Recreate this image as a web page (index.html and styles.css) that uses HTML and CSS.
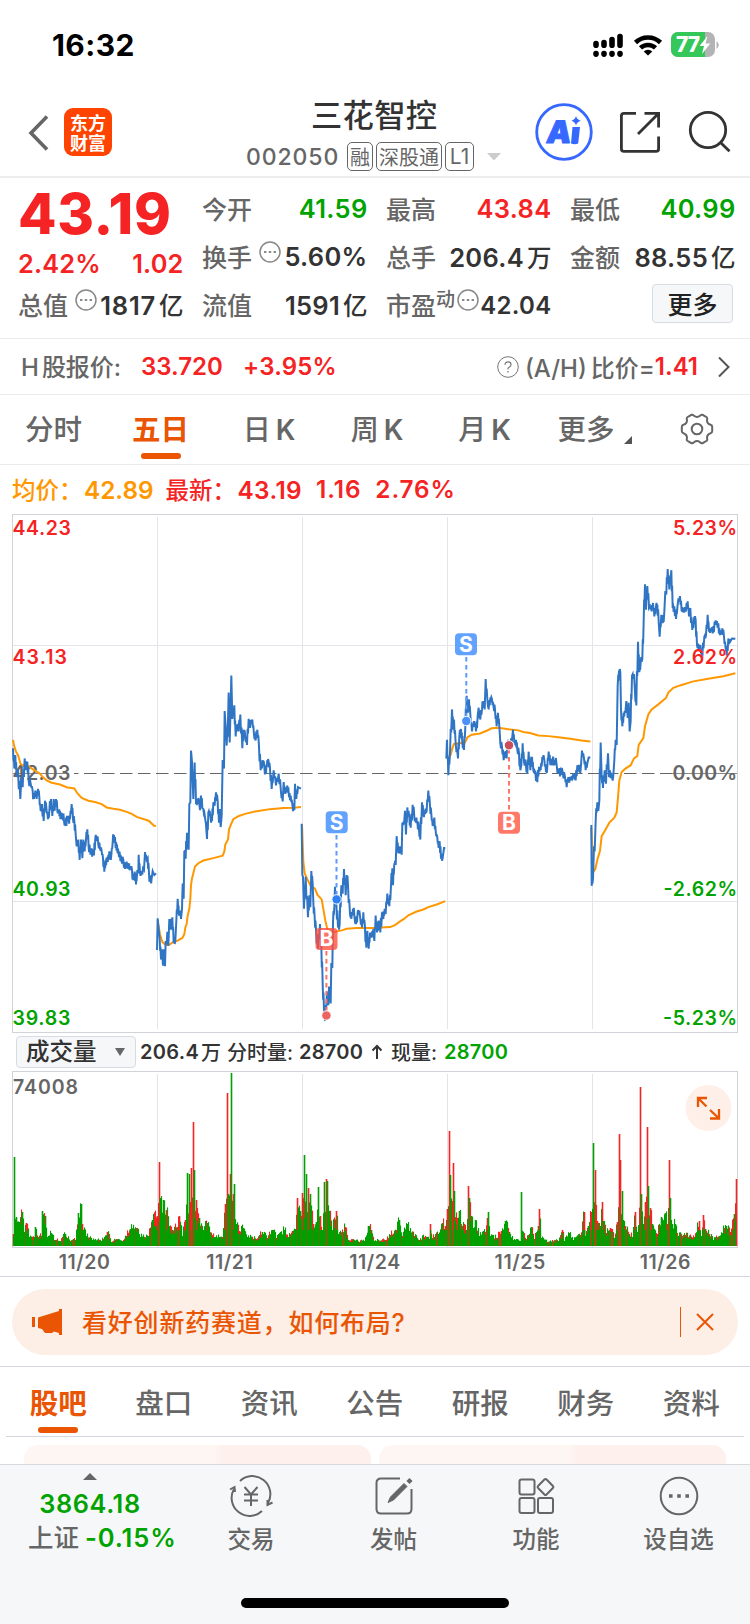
FILE: index.html
```html
<!DOCTYPE html>
<html lang="zh-CN">
<head>
<meta charset="utf-8">
<title>三花智控 002050</title>
<link rel="stylesheet" href="styles.css">
</head>
<body>
<div class="app">
  <div class="status">
    <span class="clock">16:32</span>
    <svg class="status-icons" width="128" height="28" viewBox="592 31 128 28">
      <g stroke="#000" stroke-width="5.6" stroke-linecap="round">
        <path d="M596 43.5v1.700M604 42.500v2.700M612 39.500v5.700M620 36.500v8.700"/>
        <path d="M596 53.500v.6M604 53.500v.6M612 53.500v.6M620 53.500v.6"/>
      </g>
      <g fill="none" stroke="#000" stroke-width="4.600">
        <path d="M635.500 42.500a18 18 0 0 1 25 0"/>
        <path d="M640.500 47.900a11 11 0 0 1 15 0"/>
      </g>
      <path d="M643.700 51.400a6.200 6.200 0 0 1 8.600 0L648 55.400z"/>
      <clipPath id="batt"><rect x="671" y="32" width="44" height="25" rx="7"/></clipPath>
      <g clip-path="url(#batt)"><path fill="#b3b3b5" d="M671 32h44v25h-44z"/><path fill="#34c759" d="M671 32h34v25h-34z"/></g>
      <path fill="#b3b3b5" d="M716.500 41q4.500 4 0 8z"/>
      <text class="batt-num" x="676" y="52" textLength="24">77</text>
      <path fill="#fff" d="M707.500 36l-8 10h4.500l-2 8 8.300-10.500h-4.800z"/>
    </svg>
  </div>

  <header class="header">
    <svg class="back" width="22" height="38" viewBox="0 0 22 38"><path d="M19 2.500L3 19l16 16.500" fill="none" stroke="#666" stroke-width="3.600"/></svg>
    <div class="logo">东方<br>财富</div>
    <div class="title-block">
      <div class="stock-name">三花智控</div>
      <div class="stock-meta">
        <span class="code">002050</span><span class="tag">融</span><span class="tag">深股通</span><span class="tag tag-l">L1</span>
        <svg class="drop" width="14" height="8"><path d="M0 0h14l-7 7.500z" fill="#ccc"/></svg>
      </div>
    </div>
    <svg class="actions" width="200" height="60" viewBox="534 102 200 60">
      <circle cx="564" cy="132" r="27.300" fill="none" stroke="#3668ff" stroke-width="2.800"/>
      <text class="ai" transform="translate(545.500 142.500) skewX(-7)" textLength="21">A</text>
      <path fill="#3668ff" d="M572.500 127h7.500l-1.800 16.500q-3.600 1.500-7.200 0zM576 116q1 3.800 4.800 4.800-3.800 1-4.800 4.600-1-3.600-4.600-4.600 3.600-1 4.600-4.800z"/>
      <g fill="none" stroke="#333" stroke-width="2.800">
        <path d="M636 113.400h-12q-2.600 0-2.600 2.600v33q0 2.400 2.600 2.400h32q2.600 0 2.600-2.400v-12.500M644.500 113.400h14.100v14M658 114l-20 20"/>
        <circle cx="708" cy="130" r="17.700"/><path d="M720.500 142.500l9 8.800"/>
      </g>
    </svg>
  </header>

  <section class="quote">
    <div class="q-main">
      <div class="price">43.19</div>
      <div class="row change"><span>2.42%</span><span>1.02</span></div>
      <div class="row"><label>总值</label><svg class="dots" viewBox="0 0 22 22"><circle cx="11" cy="11" r="10"/><path d="M5 11h2.400m2.400 0h2.400m2.400 0h2.400"/></svg><b>1817<i>亿</i></b></div>
    </div>
    <div>
      <div class="row"><label>今开</label><b class="down">41.59</b></div>
      <div class="row"><label>换手</label><svg class="dots" viewBox="0 0 22 22"><circle cx="11" cy="11" r="10"/><path d="M5 11h2.400m2.400 0h2.400m2.400 0h2.400"/></svg><b>5.60%</b></div>
      <div class="row"><label>流值</label><b>1591<i>亿</i></b></div>
    </div>
    <div>
      <div class="row"><label>最高</label><b class="up">43.84</b></div>
      <div class="row"><label>总手</label><b>206.4<i>万</i></b></div>
      <div class="row"><label>市盈<sup>动</sup></label><svg class="dots near" viewBox="0 0 22 22"><circle cx="11" cy="11" r="10"/><path d="M5 11h2.400m2.400 0h2.400m2.400 0h2.400"/></svg><b class="pe">42.04</b></div>
    </div>
    <div>
      <div class="row"><label>最低</label><b class="down">40.99</b></div>
      <div class="row"><label>金额</label><b>88.55<i>亿</i></b></div>
      <div class="row"><button class="more">更多</button></div>
    </div>
  </section>

  <section class="hk">
    <span class="hk-label">H<i>股报价:</i></span><span class="up hk-price">33.720</span><span class="up hk-pct">+3.95%</span>
    <svg class="help" width="22" height="22" viewBox="0 0 22 22"><circle cx="11" cy="11" r="10.300" fill="none" stroke="#777"/><path d="M8 8.800q0-3 3-3t3 2.700q0 1.700-1.600 2.600T11 13.300M11 15v1.500" fill="none" stroke="#777" stroke-width="1.200"/></svg>
    <span class="ratio">(A/H)<i>比价</i>=</span><span class="up hk-ratio">1.41</span>
    <svg class="go" width="12" height="22" viewBox="0 0 12 22"><path d="M1 1.500L10.500 11 1 20.500" fill="none" stroke="#555" stroke-width="2"/></svg>
  </section>

  <nav class="periods">
    <span>分时</span><span class="on">五日</span><span class="k">日<em>K</em></span><span class="k">周<em>K</em></span><span class="k">月<em>K</em></span><span class="p-more">更多<svg width="8" height="8"><path d="M8 0v8H0z" fill="#555"/></svg></span>
    <svg class="gear" width="34" height="34" viewBox="-17 -17 34 34"><g fill="none" stroke="#666" stroke-width="2"><circle r="5.300"/><path d="M-5.500-14.200Q-4-14.600-3-13.200 0-10.800 3-13.200 4-14.600 5.500-14.200L9.700-11.800Q10.800-10.800 10-8.800 10-5.400 13.600-4.200 15.200-3.800 15.200-2V2Q15.200 3.800 13.600 4.200 10 5.400 10 8.800 10.800 10.800 9.700 11.800L5.500 14.200Q4 14.600 3 13.200 0 10.800-3 13.200-4 14.600-5.500 14.200L-9.700 11.800Q-10.800 10.800-10 8.800-10 5.400-13.600 4.200-15.200 3.800-15.200 2V-2Q-15.200-3.800-13.600-4.200-10-5.400-10-8.800-10.800-10.800-9.700-11.800z"/></g></svg>
  </nav>

  <section class="info">
    <span class="avg"><i>均价：</i>42.89</span><span class="up"><i>最新：</i>43.19</span><span class="up">1.16</span><span class="up">2.76%</span>
  </section>

  <svg class="chart" width="750" height="521" viewBox="0 513 750 521">
    <g fill="none" stroke="#e3e5ec" stroke-width="1">
      <path d="M13 645.500H737M13 901.500H737M157.500 517V1029M302.500 517V1029M447.500 517V1029M592.500 517V1029"/>
      <rect x="12.500" y="514.500" width="725" height="518" stroke="#d0d3d9"/>
    </g>
    <path d="M74 773.500H672" stroke="#666" stroke-width="1.200" stroke-dasharray="12.500 5.500" stroke-dashoffset="8"/>
    <path d="M13 773.500H69M672 773.500H737" stroke="#888" stroke-width="1.200"/>
    <g class="axis">
      <g class="f-up"><text x="12.500" y="535" textLength="58.500">44.23</text><text x="12.500" y="664" textLength="54.500">43.13</text><text x="673" y="535" textLength="64">5.23%</text></g>
      <g class="f-mid"><text x="12.500" y="780" textLength="58">42.03</text><text x="672.500" y="780" textLength="64.500">0.00%</text></g>
      <g class="f-down"><text x="12.500" y="896" textLength="58">40.93</text><text x="12.500" y="1025" textLength="58">39.83</text><text x="663.500" y="896" textLength="73.500">-2.62%</text><text x="663" y="1025" textLength="74">-5.23%</text></g>
    </g>
    <g class="line avg-line">
      <g transform="translate(0 510) scale(.33333 .338)">
        <polyline points="39,680 43,700 48,715 54,725 62,752 72,757 85,758 100,768 120,780 128,790 140,800 155,807 180,812 200,820 223,824 232,838 245,852 265,860 285,864 305,870 320,880 340,884 360,887 380,893 395,899 410,908 430,914 447,920 462,934 468,935"/>
        <polyline points="473,1215 480,1255 487,1278 497,1287 510,1285 520,1278 533,1274 547,1266 553,1255 556,1235 560,1225 563,1200 568,1180 571,1150 573,1110 576,1090 580,1075 585,1055 595,1045 610,1037 640,1030 668,1023 673,1010 676,990 684,975 687,945 693,930 700,915 715,906 735,899 770,891 810,885 850,882 880,881 903,879"/>
      </g>
      <g transform="translate(290 510) scale(.33333 .338)">
        <polyline points="36,930 40,1040 44,1075 52,1092 62,1112 75,1120 82,1138 95,1152 100,1180 106,1215 112,1240 125,1250 140,1247 158,1243 170,1239 200,1237 250,1237 300,1234 315,1228 330,1217 342,1210 355,1199 380,1188 400,1182 415,1175 440,1167 466,1157"/>
        <polyline points="469,735 474,732 482,725 487,705 492,692 505,690 525,688 532,673 545,665 570,661 590,653 605,646 625,644 650,648 685,652 700,657 720,660 745,667 775,669 805,672 840,677 875,682 901,685"/>
      </g>
      <g transform="translate(510 510) scale(.33333 .338)">
        <polyline points="244,940 250,1070 256,1062 262,1035 270,1008 275,965 285,948 298,925 313,910 320,895 324,850 328,800 335,775 345,766 362,755 372,735 382,728 386,695 400,675 405,640 415,605 425,590 445,575 468,556 475,540 490,526 510,519 550,507 590,500 640,492 676,483"/>
      </g>
    </g>
    <g class="line price-line">
      <g transform="translate(0 510) scale(.33333 .338)">
        <polyline points="39,705 43,765 46,725 50,790 54,770 61,855 64,790 68,820 74,735 78,770 82,745 86,800 92,810 98,830 102,855 106,830 110,855 114,825 118,850 122,890 126,870 131,920 135,860 139,880 144,915 148,890 153,855 157,905 161,855 164,890 168,855 172,890 176,895 180,890 184,915 188,900 192,920 197,935 201,905 206,915 210,915 215,870 219,915 223,920 227,960 230,995 235,975 239,1035 243,975 247,1030 250,975 254,1010 258,975 262,945 266,1000 270,1005 274,1020 278,1005 282,1022 286,970 290,965 295,990 300,1002 305,1010 309,1030 313,1070 317,1035 321,1042 325,1020 330,1025 334,1020 338,985 342,962 347,1000 351,990 356,1018 360,1022 364,1032 370,1035 375,1062 380,1040 385,1062 391,1055 396,1065 400,1095 404,1070 408,1108 412,1065 415,1075 416,1020 420,1070 424,1080 429,1060 432,1065 435,1012 440,1035 443,1030 447,1075 451,1100 455,1090 458,1068 463,1080 468,1075"/>
        <polyline points="471,1302 473,1208 476,1240 479,1270 483,1330 486,1300 489,1348 492,1300 495,1350 497,1275 500,1285 502,1248 505,1290 508,1210 512,1242 517,1205 521,1280 526,1275 529,1215 533,1150 537,1200 540,1185 543,1210 546,1180 548,1105 551,1150 553,1008 557,1032 561,955 566,1005 568,870 571,865 573,712 576,745 579,830 580,855 584,747 588,870 592,855 597,862 600,888 603,845 607,882 610,885 615,910 618,930 621,973 625,895 629,890 632,912 636,920 640,865 644,875 648,835 653,860 657,925 659,885 662,938 665,905 668,740 672,765 674,595 677,640 680,697 684,625 686,540 689,688 692,580 694,490 697,618 703,578 707,670 711,635 716,655 721,605 727,705 731,650 736,675 741,695 746,618 750,645 757,620 762,665 767,682 772,650 777,700 782,770 788,740 793,760 798,780 802,740 806,745 810,765 815,825 821,770 828,815 836,780 843,835 848,862 851,805 856,840 862,815 867,850 872,845 877,870 883,888 885,810 889,855 894,820 898,822 903,824"/>
      </g>
      <g transform="translate(290 510) scale(.33333 .338)">
        <polyline points="35,928 37,1080 39,1085 42,1180 47,1085 54,1205 58,1140 61,1175 64,1068 68,1105 70,1160 74,1205 78,1240 84,1298 90,1225 94,1290 98,1400 102,1478 105,1512 111,1425 115,1465 117,1410 122,1460 124,1340 127,1355 129,1220 133,1175 135,1115 139,1160 144,1235 149,1225 154,1110 158,1135 162,1062 167,1140 170,1080 174,1110 180,1195 184,1210 189,1180 193,1200 198,1225 203,1190 208,1185 211,1210 216,1235 220,1190 225,1235 229,1295 232,1245 236,1298 240,1250 245,1265 250,1240 253,1275 257,1200 261,1250 266,1215 271,1250 276,1190 280,1210 284,1180 287,1195 292,1135 298,1172 303,1110 307,1060 309,1110 313,1045 317,1050 320,965 325,1015 330,995 335,1020 337,925 342,930 345,890 348,960 352,880 358,910 362,940 368,872 373,910 378,925 382,920 387,945 391,975 396,865 400,900 405,900 410,890 415,830 420,875 424,900 428,935 433,910 438,960 442,970 446,1000 449,980 453,1032 458,1030 462,1000 466,1000"/>
        <polyline points="469,735 471,680 475,785 480,720 486,590 490,650 492,620 497,690 504,735 508,670 513,648 517,690 522,710 526,640 530,550 534,600 537,560 541,605 546,655 552,625 558,655 563,610 566,585 571,620 576,590 580,565 584,590 587,500 592,560 596,590 601,555 606,560 611,585 615,590 620,640 624,600 628,640 631,690 636,700 641,740 645,715 650,735 654,680 657,695 662,690 666,680 669,650 673,690 678,680 682,710 687,720 691,770 694,755 698,690 702,745 708,755 712,780 716,715 721,770 726,730 730,770 736,775 742,805 747,760 752,770 757,730 763,740 768,775 772,760 776,715 781,755 787,745 794,740 800,755 807,780 812,770 818,775 825,790 830,820 835,790 843,800 850,780 857,800 862,755 868,775 873,755 876,712 882,735 887,770 892,750 896,732 901,732"/>
      </g>
      <g transform="translate(510 510) scale(.33333 .338)">
        <polyline points="244,932 245,1112 249,1090 252,995 254,1010 257,920 262,865 265,890 268,860 272,688 275,790 279,822 284,770 288,810 294,720 297,790 300,770 305,795 310,785 313,740 317,680 320,695 323,520 327,475 331,480 333,590 337,640 341,600 346,600 349,565 353,615 356,570 359,655 362,625 366,490 372,485 375,540 379,578 384,390 388,480 392,450 397,440 401,330 405,220 408,295 412,225 417,290 420,285 425,300 429,275 433,315 438,285 442,280 446,330 449,375 454,310 458,335 463,300 466,240 469,250 473,175 478,235 484,178 488,290 493,285 498,322 503,280 510,255 515,300 520,290 528,300 533,270 537,315 541,290 547,355 552,325 557,325 561,400 566,415 571,400 577,437 583,375 588,370 593,310 597,360 602,350 608,365 614,330 619,340 625,335 630,370 637,350 642,375 647,410 650,430 655,380 660,390 666,380 676,381"/>
      </g>
    </g>
    <g class="axis f-up"><text x="673" y="664" textLength="64">2.62%</text></g>
    <g stroke-width="2" stroke-dasharray="4.500 3.500" fill="none">
      <path d="M336.500 835V896M466.300 657V717" stroke="#5b9cf8"/>
      <path d="M326.400 951V1012M509 749V811" stroke="#fb7465"/>
    </g>
    <g stroke="#fff" stroke-width="1"><circle cx="336.600" cy="899.400" r="4.700" fill="#2f80f5"/><circle cx="466.300" cy="721" r="4.700" fill="#4b91fa"/><circle cx="326.400" cy="1015.500" r="4.700" fill="#ec6361"/><circle cx="509" cy="745.300" r="4.700" fill="#c94d5b"/></g>
    <g class="mark"><rect x="325.700" y="811.300" width="22" height="22" rx="4" fill="#62a2ff"/><text x="336.700" y="829.700">S</text><rect x="455" y="633.200" width="22" height="22" rx="4" fill="#62a2ff"/><text x="466" y="651.600">S</text><rect x="315.500" y="928" width="22" height="22" rx="4" fill="#ff4b3c" fill-opacity=".78"/><text x="326.500" y="946.400">B</text><rect x="498" y="811.700" width="22" height="22" rx="4" fill="#ff7868"/><text x="509" y="830.100">B</text></g>
  </svg>

  <section class="volbar">
    <div class="select"><span>成交量</span><svg width="10" height="8"><path d="M0 0h10L5 8z" fill="#666"/></svg></div>
    <span class="v1">206.4</span><i class="v2">万</i><i class="v3">分时量:</i><span class="v4">28700</span><svg class="arrow" width="12" height="16" viewBox="0 0 12 16"><path d="M6 15V2M1.500 6.500L6 2l4.500 4.500" fill="none" stroke="#333" stroke-width="2"/></svg><i class="v5">现量:</i><span class="down v6">28700</span>
  </section>

  <svg class="volume" width="750" height="178" viewBox="0 1071 750 178">
    <path d="M157.500 1074V1247M302.500 1074V1247M447.500 1074V1247M592.500 1074V1247" stroke="#e1e3ea"/>
    <rect x="12.500" y="1071.500" width="725" height="176" fill="none" stroke="#d0d3d9"/>
    <g id="bars"></g>
    <g class="axis f-mid"><text x="13" y="1094" textLength="65">74008</text></g>
    <circle cx="708.500" cy="1108" r="23" fill="#feefe8"/>
    <path d="M698 1107V1098h9M698 1098l8.500 8.500M719 1109v9.500h-9M719 1118.500l-9-8.500" fill="none" stroke="#ea5504" stroke-width="2.300"/>
  </svg>
  <div class="dates"><span>11/20</span><span>11/21</span><span>11/24</span><span>11/25</span><span>11/26</span></div>

  <div class="banner-wrap">
    <div class="banner">
      <svg width="31" height="26" viewBox="0 0 31 26" fill="#ea5504"><path d="M0 8h3v10H0zM6 8.500L27 2V0h3v26h-3v-2l-5-1.500-2 1.500h-7l-3-4-4-1z"/></svg>
      <span class="b-text">看好创新药赛道，如何布局?</span>
      <span class="b-div"></span>
      <svg width="18" height="18" viewBox="0 0 18 18"><path d="M1 1l16 16M17 1L1 17" stroke="#ea5504" stroke-width="2"/></svg>
    </div>
  </div>

  <nav class="topics"><span class="on">股吧</span><span>盘口</span><span>资讯</span><span>公告</span><span>研报</span><span>财务</span><span>资料</span></nav>
  <div class="cards"><div></div><div></div></div>

  <footer class="dock">
    <div class="index">
      <svg width="14" height="7"><path d="M0 7h14L7 0z" fill="#666"/></svg>
      <span class="i-val">3864.18</span>
      <span class="i-row"><i>上证</i><b>-0.15%</b></span>
    </div>
    <div class="dock-item"><svg width="46" height="42" viewBox="-23 -21 46 42"><path d="M-11-15A18 18 0 0 1 17 7M11 15A18 18 0 0 1-17-7"/><path d="M-21-6.500l4.500-2.500.5 5M21.500 6.500l-5 2.500 0-5M-6.500-9L0-1.500 6.500-9M0-1.500V10M-7-1.500H7M-7 4.500H7"/></svg><span>交易</span></div>
    <div class="dock-item"><svg width="46" height="42" viewBox="-23 -21 46 42"><path d="M6-17.500h-19q-4.500 0-4.500 4.500v26q0 4.500 4.500 4.500h26q4.500 0 4.500-4.500V-7"/><path d="M-6 6.500l2.500-5.500L10-12.500l3 3L-.5 4z" fill="#666" stroke-width="1"/><path d="M14-13.500l3-3" stroke-width="4.500"/></svg><span>发帖</span></div>
    <div class="dock-item"><svg width="46" height="42" viewBox="-23 -21 46 42"><rect x="-16.500" y="-16.500" width="15" height="15" rx="2"/><rect x="-16.500" y="2" width="15" height="15" rx="2"/><rect x="2" y="2" width="15" height="15" rx="2"/><rect x="3.500" y="-15" width="12" height="12" rx="1.500" transform="rotate(45 9.500 -9)"/></svg><span>功能</span></div>
    <div class="dock-item"><svg width="46" height="42" viewBox="-23 -21 46 42"><circle r="18.300"/><path d="M-10 0h3.600M-1.800 0h3.600M6.400 0h3.600" stroke-width="3.600"/></svg><span>设自选</span></div>
    <div class="home"></div>
  </footer>
</div>
<script src="script.js"></script>
</body>
</html>
```
FILE: styles.css
```css
* { box-sizing: border-box; }
body { margin: 0; background: #fff; font-family: Inter, "Noto Sans CJK SC", sans-serif; font-weight: 500; color: #666; }
i, em { font-style: normal; }
b { font-weight: 600; }
svg { display: block; flex: none; }
.app { width: 750px; height: 1624px; overflow: hidden; display: flex; flex-direction: column; }
.app > * { flex: none; }
.up { color: #f52323; }
.down { color: #00a300; }
.up, .down, .avg { font-weight: 600; }

.status { height: 88px; display: flex; justify-content: space-between; padding: 31px 30px 0 52px; }
.clock { font-size: 30px; line-height: 28px; font-weight: 700; letter-spacing: .4px; color: #000; }
.batt-num { font: 800 21px Inter, sans-serif; fill: #fff; }

.header { height: 90px; border-bottom: 2px solid #ededed; display: flex; align-items: flex-start; }
.back { margin: 25.500px 0 0 28px; }
.logo { width: 48px; height: 48px; margin: 19.500px 0 0 14px; padding-top: 4px; border-radius: 9px; background: #ff4400; color: #fff; font: 700 18px/20px "Noto Sans CJK SC", sans-serif; text-align: center; }
.title-block { margin-left: 134px; width: 288px; display: flex; flex-direction: column; }
.stock-name { font-size: 31.300px; line-height: 40px; margin: 8px 0 0 65px; color: #333; letter-spacing: .3px; }
.stock-meta { display: flex; align-items: center; height: 30px; margin-top: 5px; }
.code { font-size: 23px; letter-spacing: .9px; width: 101px; margin-top: 2px; }
.tag { height: 29px; border: 1px solid #666; border-radius: 5px; font: 400 20px/27px "Noto Sans CJK SC", sans-serif; padding: 0 2px; margin-right: 3px; }
.tag-l { font-family: Inter, sans-serif; font-size: 21px; width: 29px; text-align: center; padding: 0; }
.drop { margin: 2px 0 0 10px; }
.actions { margin-top: 14px; }
.ai { font: 900 31px Inter, sans-serif; fill: #3668ff; stroke: #3668ff; stroke-width: 1; stroke-linejoin: round; }

.quote { height: 161px; border-bottom: 1px solid #ebebeb; display: grid; grid-template-columns: repeat(4, 165.500px); column-gap: 18.500px; padding: 5.500px 0 0 18px; }
.row { height: 48px; display: flex; align-items: center; }
.row label { font-size: 25px; white-space: nowrap; }
.row b { margin-left: auto; padding-top: 1px; font-size: 25.500px; color: #333; white-space: nowrap; letter-spacing: .3px; }
.row b.up { color: #f52323; }
.row b.down { color: #00a300; }
.row b i { font-size: 24.500px; font-weight: 500; margin-left: 3px; letter-spacing: 0; }
.row sup { font-size: 19px; line-height: 0; vertical-align: 9px; }
.price { height: 56px; font-size: 56px; line-height: 60px; font-weight: 800; color: #f52323; letter-spacing: .6px; }
.change { height: 40px; padding-top: 8px; justify-content: space-between; color: #f52323; font-size: 25.300px; font-weight: 600; letter-spacing: .2px; }
.dots { width: 22px; height: 22px; margin: -8px 0 0 7px; fill: none; stroke: #888; stroke-width: 1.500; }
.dots path { stroke-width: 2; }
.dots + b { margin-left: 0; flex: 1; text-align: right; }
.q-main .dots + b { margin-left: -4px; letter-spacing: .8px; }
.near { margin-left: 2px; }
.row .pe { font-size: 24px; padding-top: 3px; }
.more { margin: -1px 2.500px 0 auto; width: 81px; height: 39px; padding: 0; border: 1px solid #d8dbe2; border-radius: 4px; background: #f6f7f9; color: #222; font: 500 25px/34px "Noto Sans CJK SC", sans-serif; }

.hk { height: 56px; border-bottom: 1px solid #ebebeb; display: flex; align-items: center; font-size: 24px; padding: 0 20px 0 21px; white-space: nowrap; }
.hk-label { width: 120px; font-size: 24px; margin-top: -2px; }
.hk-label i { margin-left: 3px; }
.hk-price { width: 102px; }
.hk-pct { letter-spacing: .2px; }
.help { margin-left: auto; margin-right: 6px; }
.ratio { font-weight: 500; margin-top: -1px; }
.ratio i { font-weight: 500; margin: 0 0 0 4px; }
.go { margin-left: 20px; }

.periods { height: 70px; border-bottom: 1px solid #ebebeb; display: grid; grid-template-columns: 107px 107px 110px 106px 109px 106px 105px; font-size: 28.500px; line-height: 70px; text-align: center; }
.periods .on { color: #ea5504; font-weight: 600; display: flex; flex-direction: column; align-items: center; }
.periods .on::after, .topics .on::after { content: ""; width: 40px; height: 6px; border-radius: 3px; background: #ea5504; margin-top: -12.500px; flex: none; }
.periods .k { font-size: 28px; }
.periods em { margin-left: 5px; font-size: 28px; font-weight: 600; }
.p-more { display: flex; justify-content: center; align-items: center; gap: 9px; padding-left: 5px; }
.p-more svg { margin-top: 20px; }
.gear { margin: 17px 0 0 34.500px; }

.info { height: 48px; display: flex; align-items: center; gap: 13px; padding: 0 0 0 12px; font-size: 24.300px; letter-spacing: .4px; }
.info i { font-size: 23.500px; font-weight: 500; letter-spacing: 0; display: inline-block; width: 72px; }
.info span + span + span { letter-spacing: .9px; margin-left: 1px; }
.info .avg { color: #ff9800; font-weight: 600; margin-right: -1px; letter-spacing: 0; }

.axis { font: 600 19.500px Inter, sans-serif; }
.f-up { fill: #f52323; }
.f-mid { fill: #666; }
.f-down { fill: #00a300; }
.line { fill: none; stroke-linejoin: miter; }
.line polyline { vector-effect: non-scaling-stroke; }
.avg-line { stroke: #ff9800; stroke-width: 2; }
.price-line { stroke: #3075c4; stroke-width: 2; }
.mark { font: 700 21px Inter, sans-serif; text-anchor: middle; }
.mark text { fill: #fff; }

.volbar { height: 37px; display: flex; align-items: center; padding: 0 0 1px 16px; font-size: 20px; color: #333; white-space: nowrap; letter-spacing: .3px; font-weight: 600; }
.select { width: 120px; height: 32px; margin-top: -1px; border: 1px solid #d8dbe2; border-radius: 4px; background: #f6f7f9; display: flex; align-items: center; justify-content: space-between; padding: 0 10px 0 9px; font-size: 23.500px; font-weight: 500; letter-spacing: 0; }
.select span { line-height: 30px; }
.v1 { width: 61px; margin-left: 4px; }
.v2 { width: 26px; }
.v3 { width: 72px; }
.v4 { width: 72px; }
.arrow { margin-right: 8px; }
.v5 { width: 53px; }
.v2, .v3, .v5 { letter-spacing: 0; font-weight: 500; margin-top: -2px; }

.dates { height: 28px; border-bottom: 1px solid #d3d6dd; display: flex; padding: 0 12px; font-size: 19.500px; font-weight: 600; letter-spacing: .6px; line-height: 26px; }
.dates span { width: 145.300px; text-align: center; }

.banner-wrap { height: 90px; padding: 12px; border-bottom: 1px solid #d3d6dd; }
.banner { height: 66px; border-radius: 33px; background: #fdeee6; display: flex; align-items: center; padding: 0 24px 0 20px; color: #ea5504; }
.b-text { font-size: 25px; letter-spacing: .8px; margin: -3px 0 0 19px; }
.b-div { width: 1px; height: 30px; background: #ea5504; margin: 0 15px 0 auto; }

.topics { height: 70px; margin: 0 6px; border-bottom: 1px solid #d3d6dd; display: grid; grid-template-columns: repeat(7, 105.500px); font-size: 28.500px; line-height: 73px; text-align: center; }
.topics span { margin-left: -1px; }
.topics .on { color: #ea5504; font-weight: 600; display: flex; flex-direction: column; align-items: center; }
.topics .on::after { margin-top: -13px; }
.cards { height: 27px; padding: 8px 24px 0; display: flex; gap: 8px; }
.cards div { flex: 1; border-radius: 14px 14px 0 0; background: linear-gradient(90deg, #fef6f3 55%, #fef0ed 57%); }

.dock { height: 160px; border-top: 1px solid #d8dadd; background: #f6f7f9; display: grid; grid-template-columns: 180px 142px 143px 142px 143px; grid-template-rows: 133px 10px; }
.index { display: flex; flex-direction: column; align-items: center; padding-top: 8px; color: #00a300; }
.i-val { font-size: 25.300px; font-weight: 600; line-height: 30px; margin-top: 9px; letter-spacing: .6px; }
.i-row { font-size: 25.500px; line-height: 34px; margin-top: 2px; align-self: stretch; display: flex; gap: 6px; padding-left: 28px; white-space: nowrap; letter-spacing: .9px; }
.i-row i { color: #666; letter-spacing: 0; }
.dock-item { display: flex; flex-direction: column; align-items: center; padding-top: 10px; font-size: 23.500px; }
.dock-item svg { fill: none; stroke: #666; stroke-width: 2; }
.dock-item span { line-height: 34px; margin-top: 6px; }
.home { grid-column: 1 / -1; justify-self: center; width: 268px; height: 10px; border-radius: 5px; background: #000; }
```
FILE: script.js
```js
// Volume envelope: [x, height, colour of the leading bar]
const env = [
[13,12,'r'],[14,89,'g'],[16,29,'g'],[19,24,'g'],[22,34,'g'],[24,14,'g'],[26,23,'r'],[29,9,'g'],[34,9,'g'],[35,19,'g'],[38,9,'r'],[41,10,'g'],[42,35,'g'],[45,30,'g'],[47,9,'g'],[51,13,'g'],[54,6,'r'],[60,5,'g'],[65,12,'g'],[70,5,'r'],[75,6,'g'],[78,33,'g'],[81,42,'g'],[82,22,'r'],[86,10,'g'],[92,6,'g'],[101,5,'g'],[107,14,'r'],[111,4,'g'],[116,7,'r'],[122,5,'g'],[126,10,'g'],[130,17,'g'],[136,18,'r'],[140,9,'g'],[148,10,'g'],[152,26,'g'],[157,30,'r'],[159,84,'r'],[160,48,'g'],[163,46,'g'],[166,36,'r'],[169,20,'g'],[172,16,'g'],[177,19,'r'],[179,30,'r'],[182,10,'g'],[185,26,'r'],[187,73,'g'],[189,72,'g'],[190,44,'r'],[191,78,'r'],[193,124,'r'],[194,76,'g'],[196,46,'r'],[199,28,'g'],[203,16,'g'],[207,23,'g'],[212,11,'r'],[222,9,'r'],[225,42,'r'],[227,153,'r'],[228,52,'g'],[230,72,'r'],[231,173,'g'],[233,52,'r'],[234,62,'g'],[236,22,'g'],[239,15,'r'],[243,18,'g'],[247,9,'g'],[256,7,'r'],[262,14,'g'],[267,8,'r'],[273,16,'g'],[276,8,'r'],[284,16,'g'],[288,9,'g'],[292,15,'r'],[295,17,'g'],[297,48,'r'],[300,35,'g'],[302,53,'r'],[304,91,'g'],[306,72,'g'],[308,58,'r'],[310,52,'g'],[313,22,'r'],[316,24,'g'],[318,59,'g'],[320,30,'r'],[322,16,'g'],[324,64,'g'],[326,67,'r'],[327,65,'g'],[329,35,'g'],[332,16,'g'],[336,35,'r'],[338,12,'g'],[345,19,'r'],[348,6,'g'],[359,4,'r'],[364,5,'g'],[368,20,'g'],[371,16,'g'],[374,5,'g'],[385,6,'r'],[390,11,'g'],[396,16,'r'],[399,26,'g'],[402,10,'r'],[407,22,'g'],[414,10,'r'],[419,6,'g'],[424,9,'r'],[429,7,'g'],[430,22,'r'],[432,8,'g'],[438,12,'g'],[442,23,'g'],[445,20,'r'],[447,37,'r'],[449,115,'r'],[450,71,'g'],[452,45,'r'],[453,83,'r'],[454,55,'g'],[457,28,'r'],[459,35,'g'],[462,20,'r'],[466,16,'g'],[468,60,'r'],[469,48,'g'],[471,30,'g'],[473,18,'g'],[475,26,'g'],[479,10,'g'],[485,14,'r'],[487,28,'r'],[488,34,'g'],[490,10,'g'],[496,8,'r'],[501,15,'r'],[505,25,'g'],[509,14,'g'],[513,6,'g'],[520,5,'g'],[521,54,'g'],[522,15,'g'],[526,7,'r'],[531,19,'g'],[534,7,'g'],[538,20,'g'],[539,37,'r'],[541,8,'g'],[547,4,'r'],[558,5,'g'],[562,16,'r'],[564,5,'g'],[569,13,'g'],[573,6,'g'],[580,11,'r'],[584,34,'r'],[585,10,'g'],[588,20,'g'],[591,34,'r'],[593,103,'g'],[595,76,'r'],[597,25,'r'],[600,20,'g'],[602,44,'r'],[603,25,'g'],[606,13,'r'],[610,18,'r'],[614,8,'g'],[617,24,'r'],[619,112,'r'],[620,86,'r'],[622,55,'g'],[625,20,'r'],[629,12,'g'],[632,9,'g'],[635,34,'r'],[637,14,'g'],[640,159,'r'],[641,52,'g'],[643,22,'g'],[645,44,'r'],[647,119,'r'],[648,60,'g'],[650,38,'r'],[652,22,'g'],[657,12,'r'],[661,29,'g'],[665,33,'g'],[667,22,'r'],[669,86,'r'],[670,48,'g'],[672,22,'g'],[675,22,'g'],[678,10,'g'],[685,11,'r'],[694,9,'g'],[699,25,'r'],[701,10,'g'],[703,31,'r'],[705,17,'g'],[709,12,'r'],[713,6,'g'],[719,10,'g'],[726,20,'g'],[730,14,'r'],[734,32,'g'],[736,67,'r']
];
const fill = { r: '#f52323', g: '#00a000' };
const group = document.getElementById('bars');
const put = (x, h, c, w) => {
  const bar = document.createElementNS('http://www.w3.org/2000/svg', 'rect');
  bar.setAttribute('x', x); bar.setAttribute('y', 1246 - h);
  bar.setAttribute('width', w); bar.setAttribute('height', h);
  bar.setAttribute('fill', fill[c]);
  group.appendChild(bar);
};
let seed = 7;
const rnd = () => (seed = (seed * 16807) % 2147483647) / 2147483647;
env.forEach(([x, h, c], k) => {
  const next = env[k + 1];
  put(x - 0.3, h, c, 1.6);
  if (!next) return;
  const a = Math.min(h, 40), b = Math.min(next[1], 40);
  for (let p = x + 1; p < next[0]; p++) {
    const t = (p - x) / (next[0] - x);
    const base = a + (b - a) * t;
    put(p, base * (0.75 + rnd() * 0.5) + 1, rnd() < 0.3 ? 'r' : 'g', 1.1);
    if (rnd() < 0.8) put(p, base * 0.7, 'g', 1.1);
  }
  if (h < 60) put(x, Math.min(h, 20) * 0.8, 'g', 1.3);
});

// Tick noise between the sampled prices
document.querySelectorAll('.price-line polyline').forEach((line) => {
  const pts = line.getAttribute('points').split(' ').map((p) => p.split(',').map(Number));
  const out = [];
  pts.forEach(([x, y], k) => {
    out.push(x + ',' + y);
    const n = pts[k + 1];
    if (n && n[0] - x > 3 && k < pts.length - 3) {
      const dx = n[0] - x, dy = n[1] - y, s = Math.sign(dy) || 1;
      out.push((x + dx * 0.35) + ',' + (y + dy * 0.5 + s * rnd() * 14));
      out.push((x + dx * 0.6) + ',' + (y + dy * 0.5 - s * rnd() * 14));
    }
  });
  line.setAttribute('points', out.join(' '));
});
```
